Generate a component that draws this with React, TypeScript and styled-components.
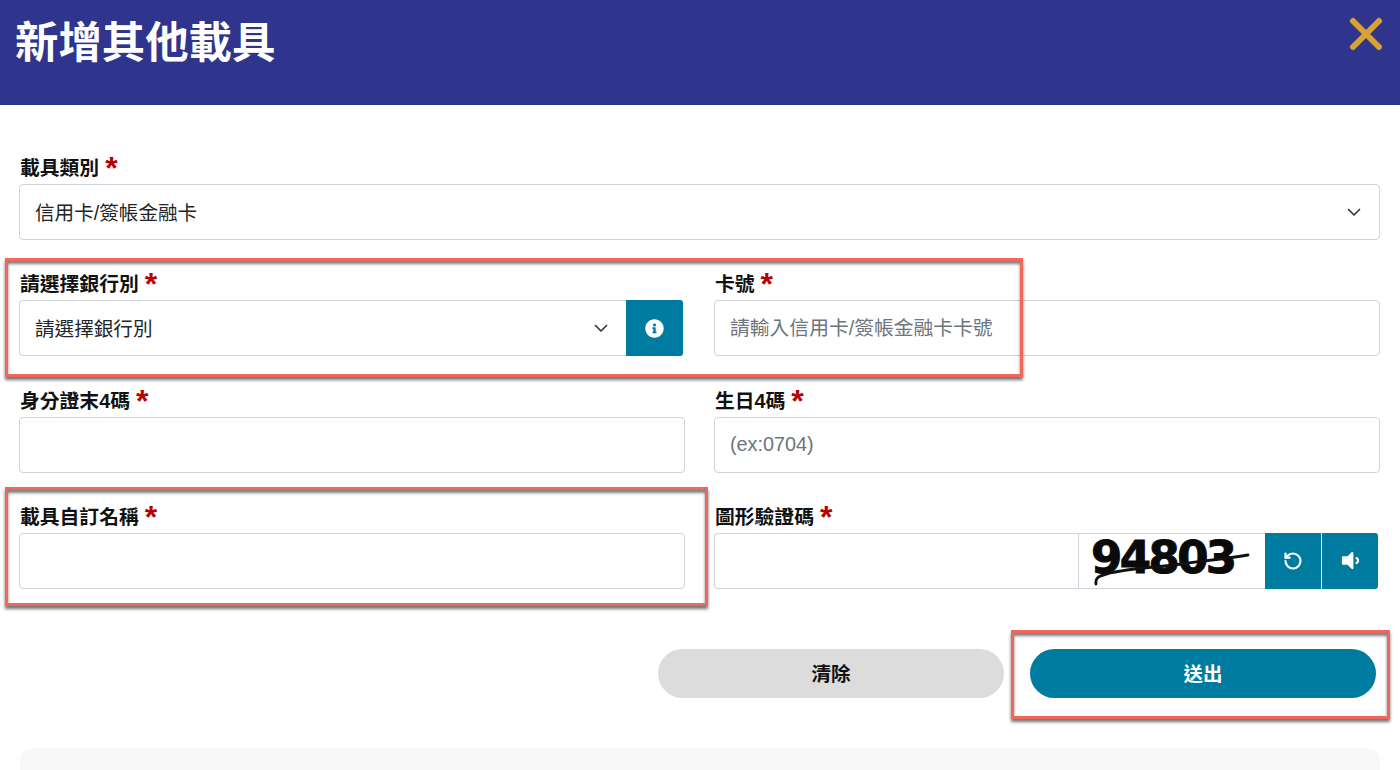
import React from 'react';
import styled, { createGlobalStyle } from 'styled-components';
import { FaInfoCircle, FaVolumeDown } from 'react-icons/fa';
import { RotateCcw } from 'lucide-react';

const FONT = `"Liberation Sans", "Noto Sans CJK TC", sans-serif`;

const GlobalStyle = createGlobalStyle`
  html, body {
    margin: 0;
    padding: 0;
    background: #fff;
    font-family: ${FONT};
    overflow: hidden;
  }
  * { box-sizing: border-box; }
`;

const Chevron: React.FC = () => (
  <ChevronIcon viewBox="0 0 16 16" aria-hidden="true">
    <path d="M2.5 5.5 8 11l5.5-5.5" fill="none" stroke="#343a40" strokeWidth="1.7" strokeLinecap="round" strokeLinejoin="round" />
  </ChevronIcon>
);

const FieldLabel: React.FC<{ text: string }> = ({ text }) => (
  <Label>
    {text}
    <Star>*</Star>
  </Label>
);

const App: React.FC = () => {
  return (
    <Page>
      <GlobalStyle />
      <Header>
        <Title>新增其他載具</Title>
        <CloseButton aria-label="關閉">
          <svg width="34" height="34" viewBox="0 0 34 34">
            <path d="M4 4 30 30M30 4 4 30" stroke="#d8a130" strokeWidth="6" strokeLinecap="round" />
          </svg>
        </CloseButton>
      </Header>

      <FormGrid>
        <Field $wide>
          <FieldLabel text="載具類別" />
          <SelectBox>
            <span>信用卡/簽帳金融卡</span>
            <Chevron />
          </SelectBox>
        </Field>

        <Field>
          <FieldLabel text="請選擇銀行別" />
          <InputGroup>
            <SelectBox $joined>
              <span>請選擇銀行別</span>
              <Chevron />
            </SelectBox>
            <InfoButton aria-label="說明">
              <FaInfoCircle size={19} />
            </InfoButton>
          </InputGroup>
        </Field>

        <Field>
          <FieldLabel text="卡號" />
          <TextInput placeholder="請輸入信用卡/簽帳金融卡卡號" />
        </Field>

        <Field>
          <FieldLabel text="身分證末4碼" />
          <TextInput />
        </Field>

        <Field>
          <FieldLabel text="生日4碼" />
          <TextInput placeholder="(ex:0704)" />
        </Field>

        <Field>
          <FieldLabel text="載具自訂名稱" />
          <TextInput />
        </Field>

        <Field>
          <FieldLabel text="圖形驗證碼" />
          <CaptchaGroup>
            <CaptchaInput />
            <CaptchaImage>
              <CaptchaText>94803</CaptchaText>
              <CaptchaLines viewBox="0 0 186 56" aria-hidden="true">
                <path d="M17 50c-1-7 3-8 14-11 22-5 50-6 72-9 22-3 40-5 66-9" fill="none" stroke="#111" strokeWidth="2.8" strokeLinecap="round" />
              </CaptchaLines>
            </CaptchaImage>
            <CaptchaButton aria-label="重新產生">
              <RotateCcw size={20} strokeWidth={2.6} />
            </CaptchaButton>
            <CaptchaButton $last aria-label="語音播放">
              <FaVolumeDown size={23} />
            </CaptchaButton>
          </CaptchaGroup>
        </Field>
      </FormGrid>

      <Actions>
        <ActionButton $variant="clear">清除</ActionButton>
        <ActionButton $variant="send">送出</ActionButton>
      </Actions>

      <NotePanel />

      <Highlight style={{ left: 5, top: 258, width: 1018, height: 119 }} />
      <Highlight style={{ left: 5, top: 487, width: 703, height: 119 }} />
      <Highlight style={{ left: 1011, top: 630, width: 379, height: 89 }} />
    </Page>
  );
};

export default App;

const Page = styled.div`
  position: relative;
  width: 1400px;
  height: 770px;
  overflow: hidden;
  background: #fff;
`;

const Header = styled.header`
  display: flex;
  justify-content: space-between;
  align-items: flex-start;
  height: 105px;
  padding: 17px 17px 0 15px;
  background: #2f358c;
`;

const Title = styled.h1`
  margin: 0;
  color: #fff;
  font-size: 43.4px;
  line-height: 52px;
  font-weight: 700;
`;

const CloseButton = styled.button`
  display: flex;
  padding: 0;
  border: 0;
  background: none;
`;

const FormGrid = styled.div`
  display: grid;
  grid-template-columns: 666px 666px;
  column-gap: 29px;
  row-gap: 32.33px;
  padding: 51px 20px 0 19px;
`;

const Field = styled.div<{ $wide?: boolean }>`
  display: flex;
  flex-direction: column;
  min-width: 0;
  ${props => props.$wide && `grid-column: 1 / -1;`}
`;

const Label = styled.label`
  display: flex;
  align-items: flex-start;
  height: 28px;
  padding-left: 1px;
  color: #111;
  font-size: 19.8px;
  line-height: 25px;
  font-weight: 700;
`;

const Star = styled.span`
  margin: -3px 0 0 6px;
  color: #b80000;
  font-size: 32px;
  line-height: 30px;
  font-weight: 700;
  font-family: "Liberation Sans", sans-serif;
`;

const SelectBox = styled.div<{ $joined?: boolean }>`
  flex: ${props => (props.$joined ? '1 1 0' : '0 0 56px')};
  display: flex;
  justify-content: space-between;
  align-items: center;
  height: 56px;
  padding: 0 17px 0 15px;
  border: 1px solid #ced4da;
  border-radius: ${props => (props.$joined ? '4px 0 0 4px' : '4px')};
  ${props => props.$joined && `border-right: 0;`}
  color: #212529;
  font-size: 19.6px;

  span {
    position: relative;
    top: -1px;
  }
`;

const ChevronIcon = styled.svg`
  width: 16px;
  height: 16px;
`;

const InputGroup = styled.div`
  display: flex;
  height: 56px;
`;

const InfoButton = styled.button`
  display: flex;
  align-items: center;
  justify-content: center;
  width: 57px;
  margin-right: 2px;
  padding: 0;
  border: 0;
  border-radius: 0 3px 3px 0;
  background: #007ba0;
  color: #fff;
`;

const TextInput = styled.input`
  width: 100%;
  height: 56px;
  padding: 0 15px;
  border: 1px solid #ced4da;
  border-radius: 4px;
  background: #fff;
  color: #212529;
  font-family: ${FONT};
  font-size: 19.8px;
  outline: none;

  &::placeholder {
    color: #6c757d;
    opacity: 1;
  }
`;

const CaptchaGroup = styled.div`
  display: flex;
  height: 56px;
  margin-right: 2px;
`;

const CaptchaInput = styled.input`
  flex: 1;
  min-width: 0;
  border: 1px solid #ced4da;
  border-right: 0;
  border-radius: 4px 0 0 4px;
  outline: none;
`;

const CaptchaImage = styled.div`
  position: relative;
  display: flex;
  align-items: center;
  width: 187px;
  padding-left: 12px;
  border: 1px solid #ced4da;
  border-right: 0;
`;

const CaptchaText = styled.span`
  position: relative;
  top: -3px;
  color: #0a0a0a;
  font-family: "DejaVu Sans", sans-serif;
  font-size: 45px;
  font-weight: 700;
  letter-spacing: -2.6px;
  line-height: 46px;
  -webkit-text-stroke: 1px #0a0a0a;
`;

const CaptchaLines = styled.svg`
  position: absolute;
  left: 0;
  top: 0;
  width: 186px;
  height: 56px;
`;

const CaptchaButton = styled.button<{ $last?: boolean }>`
  display: flex;
  align-items: center;
  justify-content: center;
  width: 56px;
  padding: 0;
  border: 0;
  margin-right: ${props => (props.$last ? '0' : '1px')};
  border-radius: ${props => (props.$last ? '0 3px 3px 0' : '0')};
  background: #007ba0;
  color: #fff;
`;

const Actions = styled.div`
  display: flex;
  justify-content: flex-end;
  gap: 26px;
  margin-top: 60px;
  padding-right: 24px;
`;

const ActionButton = styled.button<{ $variant: 'clear' | 'send' }>`
  width: 346px;
  height: 49px;
  padding: 0 0 2px;
  border: 0;
  border-radius: 25px;
  background: ${props => (props.$variant === 'send' ? '#007ba0' : '#dcdcdc')};
  color: ${props => (props.$variant === 'send' ? '#fff' : '#111')};
  font-family: ${FONT};
  font-size: 19.5px;
  font-weight: 700;
`;

const NotePanel = styled.div`
  height: 60px;
  margin: 50px 20px 0;
  border-radius: 12px;
  background: #f8f8f8;
`;

const Highlight = styled.div`
  position: absolute;
  border: 3px solid #ef675d;
  box-shadow: 0 3px 3px rgba(0, 0, 0, 0.55), inset 0 3px 3px rgba(0, 0, 0, 0.5);
  pointer-events: none;
`;
